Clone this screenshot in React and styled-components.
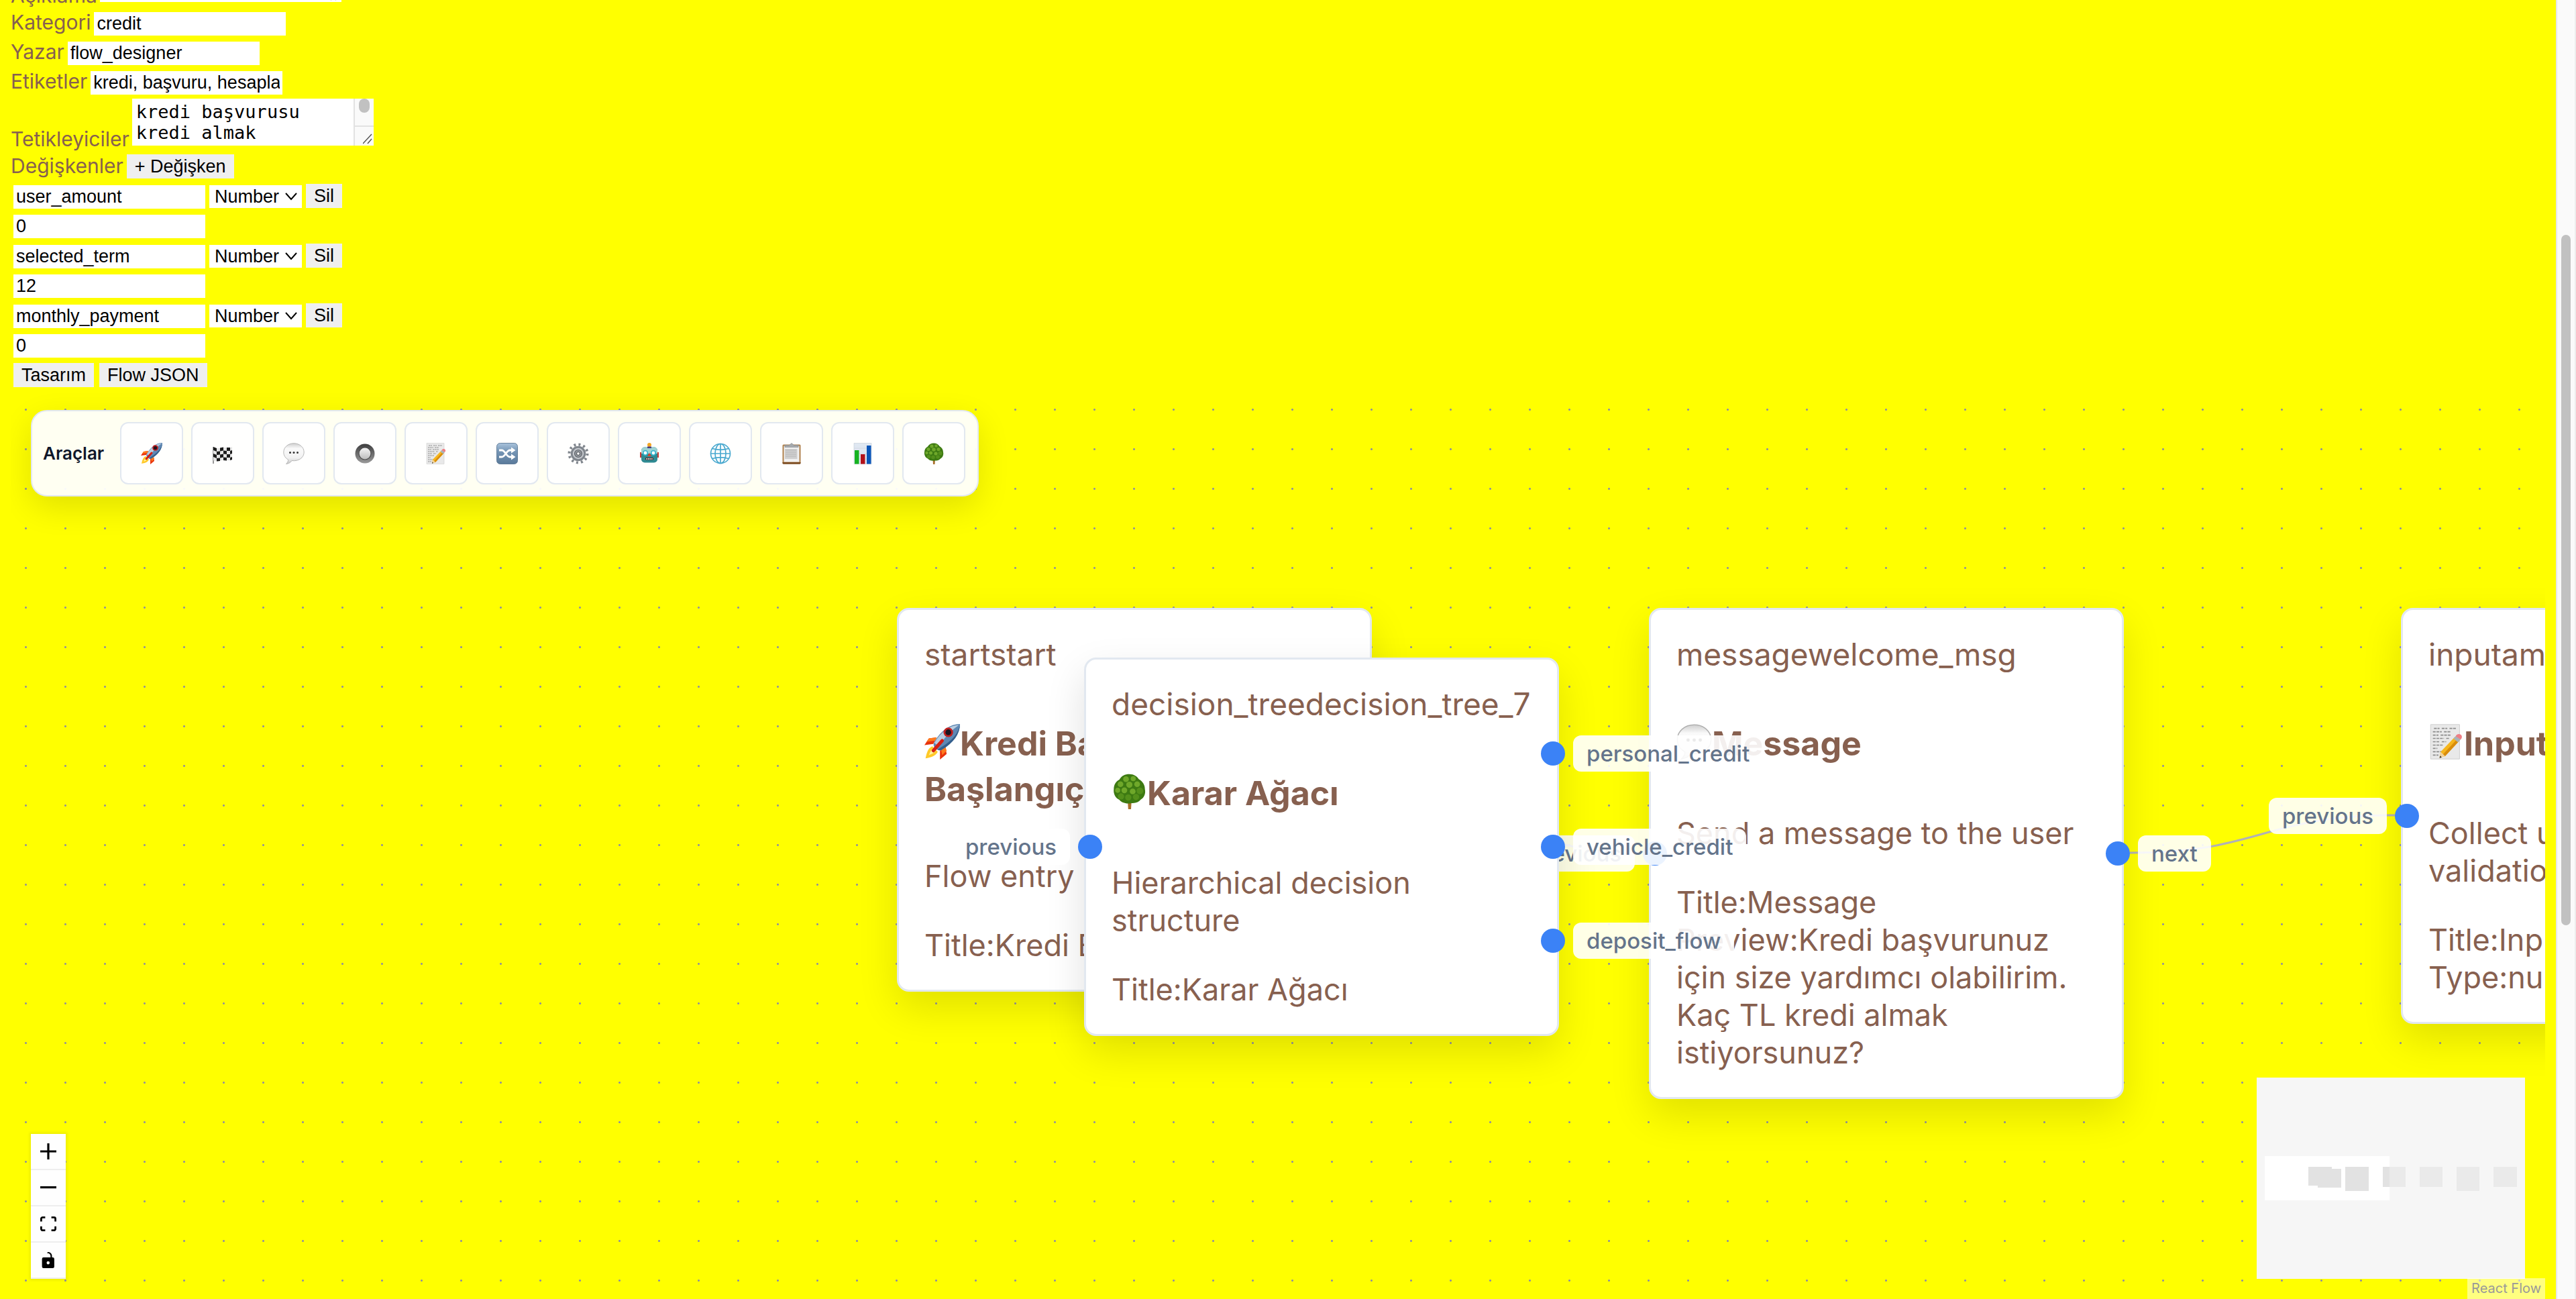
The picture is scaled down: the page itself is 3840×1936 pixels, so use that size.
import React from "react";
import styled, { createGlobalStyle, css } from "styled-components";

const UI = `Inter, "Noto Sans", sans-serif`;
const CONTROL = `"Liberation Sans", Arial, sans-serif`;
const MONO = `"DejaVu Sans Mono", monospace`;
const BROWN = "#87604f";

const GlobalStyle = createGlobalStyle`
  *, *::before, *::after { box-sizing: border-box; }
  body {
    margin: 0;
    background: #ffff00;
    color: ${BROWN};
    font-family: ${UI};
    overflow: hidden;
  }
`;

/* ---------- page shell ---------- */

const Page = styled.div`
  display: flex;
  height: 100vh;
  overflow: hidden;
`;

const Content = styled.main`
  flex: 1;
  min-width: 0;
  display: flex;
  flex-direction: column;
  padding: 0 16px;
`;

const ScrollTrack = styled.div`
  width: 30px;
  padding: 350px 6px 0;
  background: #fafafa;
  border-left: 2px solid #e8e8e8;
  border-right: 2px solid #ededed;
`;

const ScrollThumb = styled.div`
  height: 1029px;
  border-radius: 8px;
  background: #c1c1c1;
`;

/* ---------- settings form ---------- */

const Form = styled.form`
  flex: none;
  display: flex;
  flex-direction: column;
  margin-top: -68px;
`;

const Field = styled.div`
  display: flex;
  align-items: flex-start;
  gap: 5px;
  height: 44px;
`;

const AreaField = styled(Field)`
  align-items: flex-end;
  gap: 4px;
  height: 82px;
  padding-bottom: 2px;
`;

const Label = styled.label`
  font-size: 30px;
  line-height: 38px;
`;

const controlText = css`
  border: 0;
  border-radius: 0;
  color: #000;
  font-family: ${CONTROL};
  font-size: 27px;
`;

const TextInput = styled.input`
  ${controlText}
  width: 286px;
  height: 35px;
  margin: 4px 0 0;
  padding: 0 4px;
  background: #fff;
`;

const AreaBox = styled.div`
  display: flex;
  width: 360px;
  height: 70px;
  margin-bottom: 9px;
  background: #fff;
`;

const Area = styled.textarea`
  flex: 1;
  min-width: 0;
  border: 0;
  margin: 0;
  padding: 4px 6px;
  background: #fff;
  color: #000;
  font-family: ${MONO};
  font-size: 27px;
  line-height: 31px;
  resize: none;
  overflow: hidden;
  white-space: pre;
`;

const Gutter = styled.div`
  width: 30px;
  display: flex;
  flex-direction: column;
  justify-content: space-between;
  align-items: center;
  background: ${(p) => (p.$scroll ? "#fafafa" : "#fff")};
  border-left: 2px solid ${(p) => (p.$scroll ? "#e2e2e2" : "#fff")};
`;

const AreaThumb = styled.span`
  width: 16px;
  height: 21px;
  border-radius: 8px;
  background: ${(p) => (p.$scroll ? "#c1c1c1" : "transparent")};
`;

const GripCorner = styled.span`
  display: flex;
  justify-content: flex-end;
  align-items: flex-end;
  width: 100%;
  height: 30px;
  padding: 0 2px 2px 0;
  border-top: 2px solid ${(p) => (p.$scroll ? "#e2e2e2" : "#fff")};
`;

const Button = styled.button`
  ${controlText}
  flex: none;
  height: 36px;
  margin: 2px 0 0;
  padding: 0 12px;
  background: #efefef;
  line-height: 36px;
`;

const Variable = styled.div`
  height: 89px;
  padding-left: 4px;
`;

const VariableLine = styled(Field)`
  gap: 6px;
`;

const SelectBox = styled.span`
  display: grid;
  align-items: center;
  height: 34px;
  margin-top: 4px;
  background: #fff;

  > * {
    grid-area: 1 / 1;
  }

  svg {
    justify-self: end;
    margin-right: 7px;
    pointer-events: none;
  }
`;

const Select = styled.select`
  ${controlText}
  appearance: none;
  width: 138px;
  height: 34px;
  padding: 0 8px;
  background: transparent;
`;

const Tabs = styled.div`
  display: flex;
  align-items: flex-start;
  gap: 8px;
  height: 42px;
  padding-left: 4px;
`;

/* ---------- flow canvas ---------- */

const Canvas = styled.section`
  position: relative;
  flex: 1;
  min-height: 0;
  overflow: hidden;
  background-image: radial-gradient(circle, #91919a 1px, transparent 2px);
  background-size: 59px 59px;
  background-position: -7px 0;
`;

const Edges = styled.svg`
  position: absolute;
  inset: 0;
  width: 100%;
  height: 100%;
  fill: none;
  stroke: #b1b1b7;
  stroke-width: 3;
`;

const Toolbar = styled.div`
  position: absolute;
  top: 30px;
  left: 30px;
  z-index: 5;
  display: flex;
  align-items: center;
  gap: 12px;
  padding: 16px 18px 16px 16px;
  border: 2px solid #e2e8f0;
  border-radius: 24px;
  background: rgba(255, 255, 255, 0.95);
  box-shadow: 0 16px 48px rgba(0, 0, 0, 0.12);
`;

const ToolbarTitle = styled.strong`
  width: 103px;
  color: #0f172a;
  font-size: 26px;
  font-weight: 600;
`;

const Tool = styled.button`
  display: grid;
  place-items: center;
  width: 94px;
  height: 93px;
  padding: 0;
  border: 2px solid #e2e8f0;
  border-radius: 12px;
  background: rgba(255, 255, 255, 0.9);

  svg {
    width: 32px;
    height: 32px;
  }
`;

const Node = styled.article`
  position: absolute;
  left: ${(p) => p.$x}px;
  top: ${(p) => p.$y}px;
  z-index: ${(p) => p.$z};
  width: 708px;
  padding: 38px;
  border: 3px solid #e2e8f0;
  border-radius: 18px;
  background: #fff;
  box-shadow: 0 24px 60px rgba(0, 0, 0, 0.12);
  font-size: 45px;
  line-height: 56px;
`;

const NodeHeader = styled.header`
  font-size: 46px;
  white-space: nowrap;
`;

const NodeTitle = styled.h3`
  margin: 73px 0 70px;
  font-size: 50px;
  line-height: 64px;
  font-weight: 700;

  svg {
    width: 53px;
    height: 53px;
    margin-bottom: 12px;
    vertical-align: -18px;
  }
`;

const NodeText = styled.p`
  margin: 0 0 47px;
`;

const Handle = styled.span`
  position: absolute;
  top: ${(p) => p.$at}%;
  ${(p) => p.$side}: -12px;
  width: 36px;
  height: 36px;
  border-radius: 50%;
  background: #3b82f6;
  transform: translateY(-50%);
`;

const HandleLabel = styled.span`
  position: absolute;
  top: ${(p) => p.$at}%;
  ${(p) => (p.$side === "left" ? "right" : "left")}: calc(100% + 24px);
  padding: 8px 20px;
  border-radius: 12px;
  background: rgba(255, 255, 255, 0.9);
  color: #64748b;
  font-size: 33px;
  font-weight: 500;
  line-height: 38px;
  white-space: nowrap;
  transform: translateY(-50%);
`;

const Controls = styled.div`
  position: absolute;
  left: 30px;
  bottom: 30px;
  z-index: 5;
  display: flex;
  flex-direction: column;
  box-shadow: 0 0 4px 2px rgba(0, 0, 0, 0.08);
`;

const ControlButton = styled.button`
  display: grid;
  place-items: center;
  width: 52px;
  height: 54px;
  padding: 0;
  border: 0;
  border-bottom: 2px solid #eee;
  background: #fefefe;

  svg {
    width: 24px;
    max-height: 24px;
  }
`;

const MiniMap = styled.svg`
  position: absolute;
  right: 30px;
  bottom: 30px;
  z-index: 5;
  width: 400px;
  height: 300px;
  background: #fff;
`;

const Attribution = styled.a`
  position: absolute;
  right: 0;
  bottom: 0;
  z-index: 6;
  padding: 4px 6px;
  background: rgba(255, 255, 255, 0.5);
  color: #999;
  font-size: 20px;
  line-height: 23px;
  text-decoration: none;
`;

/* ---------- pictograms, drawn on a 32 x 32 grid ---------- */

const Rocket = () => (
  <svg viewBox="0 0 32 32" aria-hidden="true">
    <path d="M11 12 4 13 0 19l8-1zM19 21l1 6-6 5 0-8z" fill="#e8330c" />
    <path d="M11 12 4 13l-2 3 8-1zM19 21l1 3-4 4-1-5z" fill="#ff7a1c" />
    <path d="M7 20c-4 2-5 6-6 11 5-1 9-2 11-6z" fill="#ffc928" />
    <path d="M8 22c-2 1-3 4-4 6 3-1 5-2 6-4z" fill="#fff3a0" />
    <path d="M32 0c-9 0-17 6-23 16-1 2-1 3 0 5l2 2c2 1 3 1 5 0C26 17 32 9 32 0z" fill="#5f88b4" />
    <path d="M31 1C23 1 15 7 9 17l4 3C18 12 25 5 31 1z" fill="#b9cde0" />
    <path d="M32 0c-1 8-7 15-17 21l-3 2c2 1 3 1 4 0C26 17 32 9 32 0z" fill="#345f8c" />
    <circle cx="21.500" cy="7.500" r="4.300" fill="#c11f1f" />
    <circle cx="21.500" cy="7.500" r="2.600" fill="#1b1420" />
    <path d="M8 24 16 15" stroke="#d71f12" strokeWidth="3" strokeLinecap="round" />
  </svg>
);

const Flag = () => (
  <svg viewBox="0 0 32 32" aria-hidden="true">
    <path d="M2 6v25" stroke="#777" strokeWidth="1.500" />
    <path d="M2 6c5 3 8 2 13 1s9 2 15-1v19c-6 3-10 0-15 1S7 29 2 26z" fill="#e6e6e6" />
    <path d="M2 6l5 2v5l-5-2zM12 7.500 17 6.500v5l-5 1zM22 7l5 0v5l-5 0zM7 13l5-.5v5l-5 .5zM17 11.500l5 .5v5l-5-.5zM27 12l3-1v5l-3 1zM2 16l5 2v5l-5-2zM12 17.500l5-1v5l-5 1zM22 17l5 0v5l-5 0zM7 23l5-.5v4.500l-5 .5zM17 21.500l5 .5v4.500l-5-.5zM27 22l3-1v4l-3 1z" fill="#1c1c1c" />
  </svg>
);

const Bubble = () => (
  <svg viewBox="0 0 32 32" aria-hidden="true">
    <defs>
      <linearGradient id="bubble" x1="0" y1="0" x2="0" y2="1">
        <stop offset="0" stopColor="#cfcfcf" />
        <stop offset=".25" stopColor="#fafafa" />
        <stop offset=".7" stopColor="#f2f2f2" />
        <stop offset="1" stopColor="#c6c6c6" />
      </linearGradient>
    </defs>
    <path d="M16 .8C7.500.800.800 6.500.800 14c0 5 3 9 6.700 11 .5 2-1 4.500-3 6.500 4-.5 7-2.500 8.500-5 10 1.500 18.200-4.500 18.200-12.500C31.200 6.500 24.500.800 16 .800z" fill="url(#bubble)" stroke="#b0b0b0" strokeWidth=".9" />
    <g fill="#333">
      <circle cx="10.500" cy="14.500" r="1.500" />
      <circle cx="16" cy="14.500" r="1.500" />
      <circle cx="21.500" cy="14.500" r="1.500" />
    </g>
  </svg>
);

const Radio = () => (
  <svg viewBox="0 0 32 32" aria-hidden="true">
    <defs>
      <linearGradient id="ring" x1="0" y1="0" x2="0" y2="1">
        <stop offset="0" stopColor="#3d3d3d" />
        <stop offset="1" stopColor="#9a9a9a" />
      </linearGradient>
      <linearGradient id="knob" x1="0" y1="0" x2="0" y2="1">
        <stop offset="0" stopColor="#f4f4f4" />
        <stop offset="1" stopColor="#bdbdbd" />
      </linearGradient>
    </defs>
    <circle cx="16" cy="16" r="14.500" fill="url(#ring)" />
    <circle cx="16" cy="16" r="9.500" fill="#4c4c4c" />
    <circle cx="16" cy="16" r="8.400" fill="url(#knob)" />
  </svg>
);

const Memo = () => (
  <svg viewBox="0 0 32 32" aria-hidden="true">
    <path d="M2 .5h26v31H2z" fill="#e9e9e9" stroke="#cfcfcf" strokeWidth=".6" />
    <path d="M5 4h5M12 4h5M19 4h6M4 7h8M14 7h6M4 10h5M11 10h9M4 13h10M16 13h3M4 16h6M12 16h4M4 19h9M4 22h4M4 25h8M4 28h5" stroke="#8c8c8c" strokeWidth="1" strokeDasharray="2.500 .7" />
    <path d="M24 11.500 28 15 15 29l-5 1.500 1-5.500z" fill="#f6b61e" />
    <path d="M26 13.500 28 15 15 29l-2-1.500z" fill="#d98d0c" />
    <path d="M11 25l4 4-5 1.500z" fill="#f0d3a0" />
    <path d="M10.500 28.500l1.500 1.500-2 .7z" fill="#333" />
    <path d="M22.500 13 25 10.500 29 14 26.500 16.500z" fill="#a9b3b8" />
    <path d="M24.500 11c1-2 3-2.500 4.500-1.500s1.500 3 0 4.500z" fill="#ee7f86" />
  </svg>
);

const Shuffle = () => (
  <svg viewBox="0 0 32 32" aria-hidden="true">
    <defs>
      <linearGradient id="tile" x1="0" y1="0" x2="0" y2="1">
        <stop offset="0" stopColor="#a9c3dc" />
        <stop offset=".4" stopColor="#7595b5" />
        <stop offset="1" stopColor="#5a7a9a" />
      </linearGradient>
    </defs>
    <rect x=".5" y=".5" width="31" height="31" rx="5" fill="url(#tile)" stroke="#4f6d8b" strokeWidth=".8" />
    <path d="M4 21h4c5 0 7-10 12-10h3M4 11h4c5 0 7 10 12 10h3" fill="none" stroke="#fff" strokeWidth="2.800" />
    <path d="M22 6.500 28.500 11 22 15.500zM22 16.500 28.500 21 22 25.500z" fill="#fff" />
  </svg>
);

const Gear = () => (
  <svg viewBox="0 0 32 32" aria-hidden="true">
    <circle cx="16" cy="16" r="13.500" fill="none" stroke="#80868d" strokeWidth="4" strokeDasharray="3 4.070" />
    <circle cx="16" cy="16" r="9.800" fill="#c3c7cc" stroke="#80868d" strokeWidth="3" />
    <circle cx="16" cy="16" r="5.500" fill="#92979d" stroke="#60656b" strokeWidth="1.200" />
    <circle cx="16" cy="16" r="2.400" fill="#fff" stroke="#44484d" strokeWidth="1" />
  </svg>
);

const Robot = () => (
  <svg viewBox="0 0 32 32" aria-hidden="true">
    <path d="M2 14h4v8H2zM26 14h4v8h-4z" fill="#c93a35" />
    <circle cx="16" cy="3" r="3" fill="#f5a623" />
    <rect x="4" y="6.500" width="24" height="23" rx="5" fill="#2f8a92" />
    <path d="M9 6.500h14c3 0 5 2 5 5V16H4v-4.500c0-3 2-5 5-5z" fill="#9ed2d3" />
    <path d="M13 5.500h6V8h-6z" fill="#4c3c7c" />
    <g fill="#fff" stroke="#35b5cf" strokeWidth="1.600">
      <circle cx="10" cy="15" r="3.200" />
      <circle cx="22" cy="15" r="3.200" />
    </g>
    <path d="M16 15l3 5h-6z" fill="#d8432f" />
    <rect x="10" y="22" width="12" height="3.600" rx="1" fill="#4a2b2b" />
    <path d="M11.500 23.800h9" stroke="#fff" strokeWidth="1.800" strokeDasharray="1.500 1" />
  </svg>
);

const Globe = () => (
  <svg viewBox="0 0 32 32" aria-hidden="true">
    <g fill="none" stroke="#4aa9cf" strokeWidth="1.700">
      <circle cx="16" cy="16" r="14.500" />
      <ellipse cx="16" cy="16" rx="8" ry="14.500" />
      <path d="M16 1.500v29M1.500 16h29M4 8.500c7 2.500 17 2.500 24 0M4 23.500c7-2.500 17-2.500 24 0" />
    </g>
  </svg>
);

const Clipboard = () => (
  <svg viewBox="0 0 32 32" aria-hidden="true">
    <rect x="2.500" y="2.500" width="27" height="29" rx="1.500" fill="#b0824f" />
    <path d="M2.500 29h27v1c0 1-1 1.500-2 1.500h-23c-1 0-2-.5-2-1.500z" fill="#7a4a1f" />
    <path d="M4.500 4.500h23v24h-23z" fill="#f1f1f1" />
    <path d="M6 9h18.500v15H6z" fill="#cfcfcf" />
    <path d="M7 11h16M7 14h16M7 17h16M7 20h16" stroke="#b3b3b3" strokeWidth=".8" />
    <path d="M6 3.500h6.500L16 .5l3.500 3H26v3H6z" fill="#a5a9ad" stroke="#7d8185" strokeWidth=".6" />
  </svg>
);

const BarChart = () => (
  <svg viewBox="0 0 32 32" aria-hidden="true">
    <path d="M3 .500h26v31H3z" fill="#dfe7f1" stroke="#c4ccd6" strokeWidth=".6" />
    <path d="M3 8h26M3 16h26M3 24h26" stroke="#cdd6e2" strokeWidth=".8" />
    <path d="M4 11h6.500v20.500H4z" fill="#16b321" />
    <path d="M13 17h6.500v14.500H13z" fill="#b3121a" />
    <path d="M22 4h6.500v27.500H22z" fill="#0a55b8" />
  </svg>
);

const Tree = () => (
  <svg viewBox="0 0 32 32" aria-hidden="true">
    <path d="M14.500 24h3.500l-.5 8h-2.500z" fill="#a8702a" />
    <path d="M16 .5c4 0 7 2 8.500 4.500C28 7 30 10 30 14c1 4-1 8-4 9.500-2 2.500-5 3-8 3-5 1-9-.5-11-3C3.500 22 1.500 18 2 14 2 10 4 7 7 5.500 9 2 12 .5 16 .5z" fill="#3d7a12" />
    <g fill="#6fa82a">
      <circle cx="13" cy="5" r="2.600" />
      <circle cx="19.500" cy="4.500" r="2.300" />
      <circle cx="8" cy="9.500" r="2.600" />
      <circle cx="16" cy="10" r="2.800" />
      <circle cx="23" cy="9.500" r="2.600" />
      <circle cx="5.500" cy="15" r="2.300" />
      <circle cx="11.500" cy="15" r="2.600" />
      <circle cx="19" cy="16" r="2.600" />
    </g>
    <g fill="#54901b">
      <circle cx="25.500" cy="15.500" r="3" />
      <circle cx="8.500" cy="20.500" r="2.800" />
      <circle cx="15" cy="21.500" r="2.800" />
      <circle cx="22" cy="21" r="2.800" />
    </g>
  </svg>
);

const Chevron = () => (
  <svg width="18" height="12" viewBox="0 0 18 12" aria-hidden="true">
    <path d="M1 1l8 9 8-9" fill="none" stroke="#000" strokeWidth="2" />
  </svg>
);

const Grip = () => (
  <svg width="14" height="16" viewBox="0 0 14 16" aria-hidden="true">
    <path d="M0 15 13 1M7 15l6-7" fill="none" stroke="#555" strokeWidth="1.500" />
  </svg>
);

/* ---------- data ---------- */

const tools = [
  ["Start", Rocket],
  ["End", Flag],
  ["Message", Bubble],
  ["Button", Radio],
  ["Input", Memo],
  ["Condition", Shuffle],
  ["Process", Gear],
  ["LLM", Robot],
  ["API", Globe],
  ["Form", Clipboard],
  ["Chart", BarChart],
  ["Decision tree", Tree],
];

const variables = [
  ["user_amount", "0"],
  ["selected_term", "12"],
  ["monthly_payment", "0"],
];

const nodes = [
  {
    x: 1321, y: 325, z: 1, type: "start", id: "start", Icon: Rocket,
    title: ["Kredi Başvuru", "Başlangıç"],
    text: "Flow entry point",
    details: ["Title:Kredi Başvuru"],
    handles: [["right", 50, ""]],
  },
  {
    x: 2442, y: 325, z: 1, type: "message", id: "welcome_msg", Icon: Bubble,
    title: ["Message"],
    text: "Send a message to the user",
    details: ["Title:Message", "Preview:Kredi başvurunuz için size yardımcı olabilirim. Kaç TL kredi almak istiyorsunuz?"],
    handles: [["left", 50, "previous"], ["right", 50, "next"]],
  },
  {
    x: 3563, y: 325, z: 1, type: "input", id: "amount_input", Icon: Memo,
    title: ["Input"],
    text: "Collect user input with validation",
    details: ["Title:Input", "Type:number"],
    handles: [["left", 50, "previous"]],
  },
  {
    x: 1600, y: 399, z: 2, type: "decision_tree", id: "decision_tree_7", Icon: Tree,
    title: ["Karar Ağacı"],
    text: "Hierarchical decision structure",
    details: ["Title:Karar Ağacı"],
    handles: [
      ["left", 50, "previous"],
      ["right", 25, "personal_credit"],
      ["right", 50, "vehicle_credit"],
      ["right", 75, "deposit_flow"],
    ],
  },
];

const mapNodes = [
  [77, 133, 35, 28],
  [91, 136, 35, 28],
  [132, 133, 35, 36],
  [188, 133, 34, 30],
  [243, 133, 34, 30],
  [298, 133, 34, 36],
  [353, 133, 35, 30],
];

const controls = [
  ["Zoom in", "0 0 32 32", "M32 18.133H18.133V32h-4.266V18.133H0v-4.266h13.867V0h4.266v13.867H32z"],
  ["Zoom out", "0 0 32 5", "M0 0h32v4.2H0z"],
  ["Fit view", "0 0 32 30", "M3.692 4.63c0-.53.4-.938.939-.938h5.215V0H4.708C2.13 0 0 2.054 0 4.63v5.216h3.692V4.631zM27.354 0h-5.2v3.692h5.17c.53 0 .984.4.984.939v5.215H32V4.631A4.624 4.624 0 0027.354 0zm.954 24.83c0 .532-.4.94-.939.94h-5.215v3.768h5.215c2.577 0 4.631-2.13 4.631-4.707v-5.139h-3.692v5.139zm-23.677.94c-.531 0-.939-.4-.939-.94v-5.138H0v5.139c0 2.577 2.13 4.707 4.708 4.707h5.138V25.77H4.631z"],
  ["Toggle interactivity", "0 0 25 32", "M21.333 10.667H19.81V7.619C19.81 3.429 16.38 0 12.19 0c-4.114 1.828-1.37 2.133.305 2.438 1.676.305 4.42 2.59 4.42 5.181v3.048H3.047A3.056 3.056 0 000 13.714v15.238A3.056 3.056 0 003.048 32h18.285a3.056 3.056 0 003.048-3.048V13.714a3.056 3.056 0 00-3.048-3.047zM12.19 24.533a3.056 3.056 0 01-3.047-3.047 3.056 3.056 0 013.047-3.048 3.056 3.056 0 013.048 3.048 3.056 3.056 0 01-3.048 3.047z"],
];

/* ---------- composed parts ---------- */

const TextField = ({ id, label, value }) => (
  <Field>
    <Label htmlFor={id}>{label}</Label>
    <TextInput id={id} defaultValue={value} />
  </Field>
);

const TextAreaField = ({ id, label, value, scroll }) => (
  <AreaField>
    <Label htmlFor={id}>{label}</Label>
    <AreaBox>
      <Area id={id} rows={2} defaultValue={value} />
      <Gutter $scroll={scroll}>
        <AreaThumb $scroll={scroll} />
        <GripCorner $scroll={scroll}>
          <Grip />
        </GripCorner>
      </Gutter>
    </AreaBox>
  </AreaField>
);

const FlowNode = ({ node }) => (
  <Node $x={node.x} $y={node.y} $z={node.z}>
    <NodeHeader>
      <span>{node.type}</span>
      <span>{node.id}</span>
    </NodeHeader>
    <NodeTitle>
      <node.Icon />
      {node.title.map((line, i) => (
        <React.Fragment key={line}>
          {i > 0 && <br />}
          {line}
        </React.Fragment>
      ))}
    </NodeTitle>
    <NodeText>{node.text}</NodeText>
    {node.details.map((line) => (
      <div key={line}>{line}</div>
    ))}
    {node.handles.map(([side, at, label]) => (
      <React.Fragment key={side + at}>
        <Handle $side={side} $at={at} />
        {label && (
          <HandleLabel $side={side} $at={at}>
            {label}
          </HandleLabel>
        )}
      </React.Fragment>
    ))}
  </Node>
);

export default function App() {
  return (
    <Page>
      <GlobalStyle />
      <Content>
        <Form onSubmit={(e) => e.preventDefault()}>
          <TextAreaField id="description" label="Açıklama" value="" />
          <TextField id="category" label="Kategori" value="credit" />
          <TextField id="author" label="Yazar" value="flow_designer" />
          <TextField id="tags" label="Etiketler" value="kredi, başvuru, hesaplama" />
          <TextAreaField
            id="triggers"
            label="Tetikleyiciler"
            value={"kredi başvurusu\nkredi almak"}
            scroll
          />
          <Field>
            <Label as="span">Değişkenler</Label>
            <Button type="button">+ Değişken</Button>
          </Field>
          {variables.map(([name, value]) => (
            <Variable key={name}>
              <VariableLine>
                <TextInput aria-label="Değişken adı" defaultValue={name} />
                <SelectBox>
                  <Select aria-label="Değişken tipi" defaultValue="number">
                    <option value="number">Number</option>
                  </Select>
                  <Chevron />
                </SelectBox>
                <Button type="button">Sil</Button>
              </VariableLine>
              <VariableLine>
                <TextInput aria-label="Varsayılan değer" defaultValue={value} />
              </VariableLine>
            </Variable>
          ))}
          <Tabs>
            <Button type="button">Tasarım</Button>
            <Button type="button">Flow JSON</Button>
          </Tabs>
        </Form>

        <Canvas>
          <Edges aria-hidden="true">
            <path d="M2037 610C2234 610 2234 690 2432 690" />
            <path d="M3159 690C3356 690 3356 634 3554 634" />
          </Edges>

          {nodes.map((node) => (
            <FlowNode key={node.id} node={node} />
          ))}

          <Toolbar>
            <ToolbarTitle>Araçlar</ToolbarTitle>
            {tools.map(([name, Icon]) => (
              <Tool key={name} type="button" aria-label={name}>
                <Icon />
              </Tool>
            ))}
          </Toolbar>

          <Controls>
            {controls.map(([name, viewBox, d]) => (
              <ControlButton key={name} type="button" aria-label={name}>
                <svg viewBox={viewBox} aria-hidden="true">
                  <path d={d} />
                </svg>
              </ControlButton>
            ))}
          </Controls>

          <MiniMap viewBox="0 0 400 300" role="img" aria-label="Mini map">
            {mapNodes.map(([x, y, w, h]) => (
              <rect key={x} x={x} y={y} width={w} height={h} fill="#e2e2e2" />
            ))}
            <path
              d="M0 0h400v300H0zM12 117h186v66H12z"
              fill="rgba(240, 240, 240, 0.6)"
              fillRule="evenodd"
            />
          </MiniMap>
          <Attribution href="#react-flow">React Flow</Attribution>
        </Canvas>
      </Content>
      <ScrollTrack>
        <ScrollThumb />
      </ScrollTrack>
    </Page>
  );
}
